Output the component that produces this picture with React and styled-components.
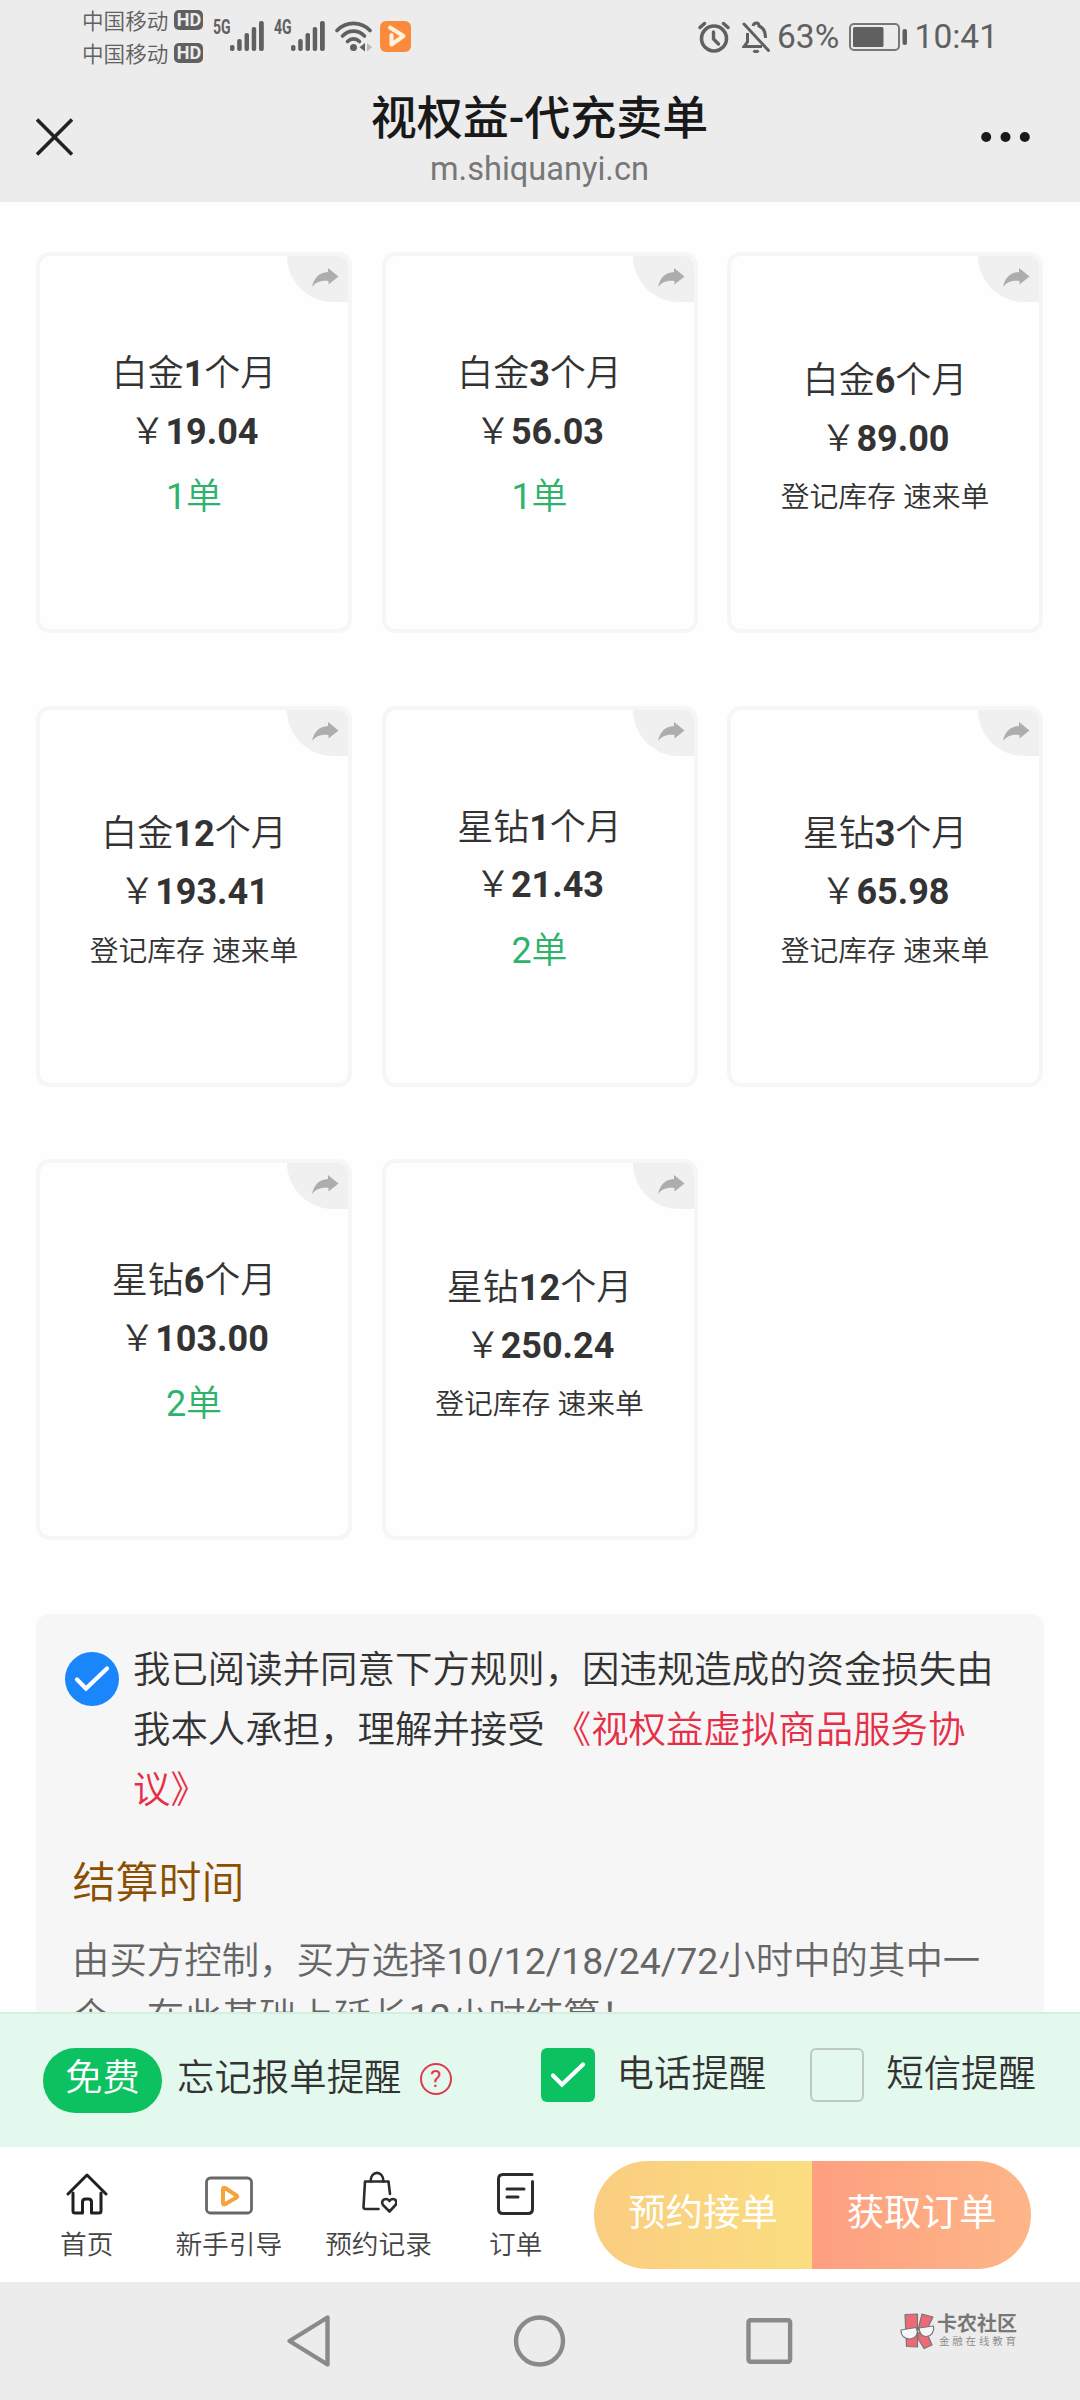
import React from 'react';
import styled, {createGlobalStyle, css} from 'styled-components';

const products = [
    {brand: '白金', months: 1, price: '19.04', count: 1},
    {brand: '白金', months: 3, price: '56.03', count: 1},
    {brand: '白金', months: 6, price: '89.00', count: 0},
    {brand: '白金', months: 12, price: '193.41', count: 0},
    {brand: '星钻', months: 1, price: '21.43', count: 2},
    {brand: '星钻', months: 3, price: '65.98', count: 0},
    {brand: '星钻', months: 6, price: '103.00', count: 2},
    {brand: '星钻', months: 12, price: '250.24', count: 0},
];

function App() {
    const [agreed, setAgreed] = React.useState(true);
    const [phone, setPhone] = React.useState(true);
    const [sms, setSms] = React.useState(false);

    return (
        <Screen>
            <GlobalStyle/>
            <StatusBar/>
            <TitleBar>
                <CloseIcon/>
                <Titles>
                    <Title>视权益-代充卖单</Title>
                    <Url>m.shiquanyi.cn</Url>
                </Titles>
                <MoreIcon/>
            </TitleBar>
            <Content>
                <Products>
                    {products.map((product, i) => <Product key={i} {...product}/>)}
                </Products>
                <Rules>
                    <Agreement onClick={() => setAgreed(!agreed)}>
                        <RoundCheck $on={agreed}>
                            <Tick/>
                        </RoundCheck>
                        <AgreementText>
                            我已阅读并同意下方规则，因违规造成的资金损失由我本人承担，理解并接受 <Link>《视权益虚拟商品服务协议》</Link>
                        </AgreementText>
                    </Agreement>
                    <RuleTitle>结算时间</RuleTitle>
                    <RuleText>
                        由买方控制，买方选择<Num>10/12/18/24/72</Num>小时中的其中一个，在此基础上延长<Num>12</Num>小时结算！
                    </RuleText>
                </Rules>
            </Content>
            <Reminder>
                <Free>免费</Free>
                <ReminderText>忘记报单提醒</ReminderText>
                <Help>?</Help>
                <Option onClick={() => setPhone(!phone)}>
                    <CheckBox $on={phone}>{phone && <Tick/>}</CheckBox>
                    <OptionText>电话提醒</OptionText>
                </Option>
                <Option $last onClick={() => setSms(!sms)}>
                    <CheckBox $on={sms}>{sms && <Tick/>}</CheckBox>
                    <OptionText>短信提醒</OptionText>
                </Option>
            </Reminder>
            <TabBar>
                <Tab $gap={60}><HomeIcon/>首页</Tab>
                <Tab $gap={62}><GuideIcon/>新手引导</Tab>
                <Tab $gap={43}><BagIcon/>预约记录</Tab>
                <Tab $gap={57}><OrderIcon/>订单</Tab>
                <Actions>
                    <Action>预约接单</Action>
                    <Action $primary>获取订单</Action>
                </Actions>
            </TabBar>
            <SystemBar/>
        </Screen>
    );
}

export default App;

function Product({brand, months, price, count}) {
    return (
        <Card>
            <Share>
                <svg width="28" height="22" viewBox="0 0 28 22">
                    <path d="M1 20C3 11 8 5.500 17 5V1l10.500 8.500-10 8V14C10 13 5 15 1 20z" fill="#adadad"/>
                </svg>
            </Share>
            <CardLine>{brand}<b>{months}</b>个月</CardLine>
            <CardLine>￥<b>{price}</b></CardLine>
            {count > 0 ? <Count><Num>{count}</Num>单</Count> : <Note>登记库存 速来单</Note>}
        </Card>
    );
}

function StatusBar() {
    return (
        <Status>
            <Carriers>
                <Carrier>中国移动<Hd>HD</Hd></Carrier>
                <Carrier>中国移动<Hd>HD</Hd></Carrier>
            </Carriers>
            <Signal label="5G"/>
            <Signal label="4G"/>
            <WifiIcon/>
            <PlayerIcon/>
            <StatusRight>
                <AlarmIcon/>
                <MutedIcon/>
                <StatusText $width={72}>63%</StatusText>
                <BatteryIcon/>
                <StatusText $width={91} $right>10:41</StatusText>
            </StatusRight>
        </Status>
    );
}

function Signal({label}) {
    return (
        <SignalBox>
            <Network>{label}</Network>
            <svg width="34" height="30" viewBox="0 0 34 30" fill="#606060">
                <rect x="0" y="24" width="4.500" height="6" rx="2"/>
                <rect x="7.200" y="18" width="4.500" height="12" rx="2"/>
                <rect x="14.500" y="12" width="4.500" height="18" rx="2"/>
                <rect x="21.700" y="6" width="4.500" height="24" rx="2"/>
                <rect x="29" y="0" width="4.800" height="30" rx="2"/>
            </svg>
        </SignalBox>
    );
}

const WifiIcon = () => (
    <svg width="38" height="31" viewBox="0 0 38 31">
        <g fill="none" stroke="#606060" strokeWidth="3.600" strokeLinecap="round">
            <path d="M2 9.500C11 0 26 0 35 9.500"/>
            <path d="M7.500 15C14 8.500 23 8.500 29.500 15"/>
            <path d="M12.500 20.500C16 17 21 17 24.500 20.500"/>
        </g>
        <circle cx="18.500" cy="26.500" r="3.500" fill="#606060"/>
        <path d="M30 22v8.500l-5.500-4.200z" fill="#606060"/>
        <path d="M32 22v8.500l5-4.200z" fill="#b8b8b8"/>
    </svg>
);

const PlayerIcon = () => (
    <PlayerSvg width="31" height="31" viewBox="0 0 31 31">
        <rect width="31" height="31" rx="6" fill="#fb8a3c"/>
        <path d="M10 6.500L23.500 15 11.500 23.500V14" fill="none" stroke="#fff3dc" strokeWidth="4"
              strokeLinejoin="round" strokeLinecap="round"/>
    </PlayerSvg>
);

const AlarmIcon = () => (
    <svg width="32" height="32" viewBox="0 0 32 32" fill="none" stroke="#606060" strokeLinecap="round">
        <circle cx="16" cy="17.500" r="12.500" strokeWidth="3.600"/>
        <path d="M15.500 11v7l5 5" strokeWidth="3.400"/>
        <path d="M2 6.500l4.500-4M30 6.500l-4.500-4" strokeWidth="3.400"/>
    </svg>
);

const MutedIcon = () => (
    <MutedSvg width="28" height="32" viewBox="0 0 28 32" fill="none" stroke="#606060" strokeWidth="3">
        <path d="M2 3l24.500 26.500" strokeLinecap="round"/>
        <path d="M11 5c1-4 6-4 6 0 4 1.500 6.500 5 6.500 12"/>
        <path d="M5.500 12v9L2 25.500h18"/>
        <path d="M11.500 29.500q2.500 2.500 5 0"/>
    </MutedSvg>
);

const BatteryIcon = () => (
    <svg width="58" height="28" viewBox="0 0 58 28">
        <rect x="1" y="1" width="49" height="26" rx="4" fill="none" stroke="#777" strokeWidth="2"/>
        <rect x="4" y="4" width="30.500" height="20" rx="1.500" fill="#606060"/>
        <rect x="53.500" y="6" width="4.500" height="16" rx="2" fill="#606060"/>
    </svg>
);

const CloseIcon = () => (
    <svg width="37" height="38" viewBox="0 0 37 38" stroke="#222" strokeWidth="3.600">
        <path d="M1 1.500L36 36.500M36 1.500L1 36.500"/>
    </svg>
);

const MoreIcon = () => (
    <svg width="49" height="10" viewBox="0 0 49 10" fill="#191919">
        <circle cx="5.200" cy="5" r="5"/>
        <circle cx="24.500" cy="5" r="5"/>
        <circle cx="43.800" cy="5" r="5"/>
    </svg>
);

const Tick = () => (
    <svg width="36" height="28" viewBox="0 0 36 28" fill="none" stroke="#fff" strokeWidth="4.200" strokeLinecap="round">
        <path d="M3 14.500l9 9L33 3.500"/>
    </svg>
);

const HomeIcon = () => (
    <svg width="42" height="42" viewBox="0 0 42 42" fill="none" stroke="#1f1f24" strokeWidth="3" strokeLinecap="round" strokeLinejoin="round">
        <path d="M2 21L21 2l19 19"/>
        <path d="M7 20v18q0 2 2 2h7.500V29q0-3 3-3h3q3 0 3 3v11H33q2 0 2-2V20"/>
    </svg>
);

const GuideIcon = () => (
    <svg width="48" height="42" viewBox="0 0 48 42" fill="none" strokeLinejoin="round">
        <rect x="1.500" y="5" width="45" height="35" rx="4" stroke="#686868" strokeWidth="2.800"/>
        <path d="M18 16.500v13.500q0 2 2 1.200L31.500 24.500q1.500-1 0-2L20 15q-2-1-2 1.500z" stroke="#f5a33c" strokeWidth="4"/>
    </svg>
);

const BagIcon = () => (
    <svg width="36" height="46" viewBox="-1 0 36 46" fill="none" stroke="#2c2c2c" strokeWidth="2.600" strokeLinecap="round" strokeLinejoin="round">
        <path d="M16.500 40H3.500Q1.500 40 1.500 38L3 12.500H26.500L28 25"/>
        <path d="M8.500 12.500C8.500 1 21.500 1 21.500 12.500"/>
        <path d="M27.500 42.500L21 36c-3-5 3-8 6.500-4 3.500-4 9-1 6 4z"/>
    </svg>
);

const OrderIcon = () => (
    <svg width="37" height="42" viewBox="0 0 37 42" fill="none" stroke="#2c2c2c" strokeWidth="3" strokeLinecap="round">
        <path d="M35 1.500H6Q1.500 1.500 1.500 6V36Q1.500 40.500 6 40.500H31Q35.500 40.500 35.500 36V8.500"/>
        <path d="M10 16H27M10 24H21"/>
    </svg>
);

const SystemBar = () => (
    <System>
        <svg width="46" height="54" viewBox="0 0 46 54" fill="none" stroke="#8a8a8a" strokeWidth="4.400" strokeLinejoin="round">
            <path d="M41.500 3.500V50.500L3.500 27z"/>
        </svg>
        <svg width="54" height="54" viewBox="0 0 54 54" fill="none" stroke="#8a8a8a" strokeWidth="4.400">
            <circle cx="27.500" cy="27" r="23.500"/>
        </svg>
        <svg width="48" height="48" viewBox="0 0 48 48" fill="none" stroke="#8a8a8a" strokeWidth="4.400">
            <rect x="2.500" y="3.200" width="41.600" height="41.600" rx="2"/>
        </svg>
        <Watermark>
            <svg width="35" height="36" viewBox="0 0 35 36" stroke="#777" strokeWidth="1.200" strokeLinejoin="round">
                <path d="M5 1.500L17.500 1V34L6.500 33.500z" fill="#ee6877"/>
                <path d="M22 1l11 3-7 14-8-1zM18 20l8-2 6 14-8 3.500-6-10z" fill="#ee6877"/>
                <path d="M1 17l15-2.500c3 6 0 11-6 11.500-5 0-9-3-9-9z" fill="#f7f7f7"/>
                <path d="M19 15l14.500-2c1 6-2 10-7 10.500-4 0-7-3-7.500-8.500z" fill="#f7f7f7"/>
            </svg>
            <div>
                <WatermarkName>卡农社区</WatermarkName>
                <WatermarkSub>金融在线教育</WatermarkSub>
            </div>
        </Watermark>
    </System>
);

const GlobalStyle = createGlobalStyle`
  * {
    box-sizing: border-box;
  }

  body {
    margin: 0;
    background: #fff;
    font-family: Roboto, "Noto Sans CJK SC", sans-serif;
    font-weight: 350;
  }
`;

// Roboto turns to Light at the body's weight, so digits get their own
const Num = styled.span`
  font-weight: 400;
`;

const Screen = styled.div`
  display: flex;
  flex-direction: column;
  width: 1080px;
  height: 2400px;
  overflow: hidden;
  color: #333;
  background: #fefefe;
`;

const Status = styled.div`
  display: flex;
  align-items: flex-start;
  height: 72px;
  padding: 3px 82px 0 82px;
  background: #ececec;
  color: #606060;

  > svg {
    margin-top: 18px;
  }
`;

const Carriers = styled.div`
  width: 131px;
`;

const Carrier = styled.div`
  display: flex;
  align-items: center;
  height: 33px;
  font-size: 21.600px;
  font-weight: 350;
`;

const Hd = styled.span`
  width: 29px;
  height: 20px;
  margin-left: 6px;
  border-radius: 5px;
  background: #606060;
  color: #ececec;
  font-size: 18px;
  font-weight: 700;
  line-height: 20px;
  text-align: center;
`;

const SignalBox = styled.div`
  display: flex;
  width: 61px;
  margin-top: 18px;
`;

const Network = styled.span`
  width: 17px;
  font-size: 19.500px;
  font-weight: 700;
  line-height: 13px;
  transform: scaleX(0.720);
  transform-origin: left top;
`;

const PlayerSvg = styled.svg`
  margin-left: 7px;
`;

const StatusRight = styled.div`
  display: flex;
  align-items: center;
  height: 32px;
  margin: 18px 0 0 auto;
`;

const MutedSvg = styled.svg`
  margin: 0 7px 0 12px;
`;

const StatusText = styled.span`
  width: ${props => props.$width}px;
  font-size: 33.500px;
  font-weight: 400;
  line-height: 32px;
  text-align: ${props => props.$right ? 'right' : 'left'};
`;

const TitleBar = styled.div`
  display: flex;
  align-items: center;
  height: 130px;
  padding: 0 50px 0 36px;
  background: #ececec;
`;

const Titles = styled.div`
  flex: 1;
  padding: 4px 0 0 25px;
  text-align: center;
`;

const Title = styled.div`
  color: #191919;
  font-size: 46px;
  font-weight: 500;
  line-height: 60px;
`;

const Url = styled.div`
  color: #777;
  font-size: 32.600px;
  font-weight: 400;
  line-height: 42px;
`;

const Content = styled.div`
  flex: 1;
  min-height: 0;
  padding: 50px 36px 0;
  overflow: hidden;
`;

const Products = styled.div`
  display: grid;
  grid-template-columns: repeat(3, 316px);
  grid-auto-rows: 381px;
  gap: 72.500px 29.500px;
`;

const Card = styled.div`
  position: relative;
  display: flex;
  flex-direction: column;
  align-items: center;
  justify-content: center;
  padding-bottom: 12px;
  border: 4px solid #f6f6f6;
  border-radius: 14px;
  overflow: hidden;
`;

const Share = styled.div`
  position: absolute;
  top: 0;
  right: 0;
  display: flex;
  justify-content: flex-end;
  width: 61px;
  height: 46px;
  padding: 11px 9px 0 0;
  border-radius: 0 0 0 46px;
  background: #f0f0f0;
`;

const CardLine = styled.div`
  font-size: 36px;
  line-height: 57.600px;
`;

const Count = styled(CardLine)`
  margin-top: 8px;
  color: #2fb36c;
`;

const Note = styled.div`
  margin-top: 6px;
  font-size: 28.800px;
  line-height: 46px;
`;

const Rules = styled.div`
  height: 500px;
  margin-top: 74px;
  padding: 26px 29px;
  border-radius: 14px;
  background: #f6f6f6;
`;

const Agreement = styled.div`
  display: flex;
`;

const RoundCheck = styled.div`
  display: flex;
  flex: none;
  align-items: center;
  justify-content: center;
  width: 54px;
  height: 54px;
  margin: 12px 14px 0 0;
  border-radius: 50%;
  background: ${props => props.$on ? '#1a86fb' : '#ccc'};
`;

const AgreementText = styled.div`
  width: 867px;
  font-size: 37.440px;
  line-height: 60px;
`;

const Link = styled.span`
  color: #e62e46;
`;

const RuleTitle = styled.div`
  margin: 31px 0 0 7.500px;
  color: #8a4f00;
  font-size: 43px;
  line-height: 64px;
`;

const RuleText = styled.div`
  width: 920px;
  margin: 18px 0 0 7px;
  color: #666;
  font-size: 37.440px;
  line-height: 56px;
`;

const Reminder = styled.div`
  display: flex;
  align-items: flex-start;
  height: 135px;
  padding: 34px 0 0 43px;
  border-top: 2px solid #d2f0e0;
  background: #e3f9ed;
  font-size: 37.440px;
  line-height: 61px;
`;

const Free = styled.div`
  width: 119px;
  height: 65px;
  border-radius: 33px;
  background: #0bc160;
  color: #fff;
  text-align: center;
`;

const ReminderText = styled.div`
  margin-left: 15px;
`;

const Help = styled.div`
  width: 32px;
  height: 32px;
  margin: 15px 0 0 18px;
  border: 2px solid #e0394b;
  border-radius: 50%;
  color: #e0394b;
  font-size: 24px;
  font-weight: 400;
  line-height: 29px;
  text-align: center;
`;

const Option = styled.div`
  display: flex;
  margin-left: ${props => props.$last ? 44 : 89}px;
`;

const CheckBox = styled.div`
  display: flex;
  align-items: center;
  justify-content: center;
  width: 54px;
  height: 54px;
  border-radius: 6px;
  ${props => props.$on ? css`
    background: #0bc160;
  ` : css`
    border: 2px solid #bfc9c4;
  `}
`;

const OptionText = styled.div`
  margin-left: 22px;
  line-height: 52px;
`;

const TabBar = styled.div`
  display: flex;
  align-items: flex-start;
  height: 135px;
  background: #fff;
`;

const Tab = styled.div`
  display: flex;
  flex-direction: column;
  align-items: center;
  justify-content: flex-end;
  height: 118px;
  margin-left: ${props => props.$gap}px;
  color: #444;
  font-size: 26.700px;
  line-height: 40px;

  svg {
    margin-bottom: 10px;
  }
`;

const Actions = styled.div`
  display: flex;
  width: 437px;
  height: 108px;
  margin: 14px 49px 0 auto;
  border-radius: 54px;
  overflow: hidden;
`;

const Action = styled.div`
  width: ${props => props.$primary ? 219 : 218}px;
  background: ${props => props.$primary
    ? 'linear-gradient(90deg, #fe9f80, #fdb687)'
    : 'linear-gradient(90deg, #facd80, #fbde80)'};
  color: #fff;
  font-size: 37.440px;
  font-weight: 400;
  line-height: 104px;
  text-align: center;
`;

const System = styled.div`
  position: relative;
  display: flex;
  align-items: center;
  height: 118px;
  padding-left: 286px;
  gap: 180px;
  background: #ececec;
`;

const Watermark = styled.div`
  position: absolute;
  top: 31px;
  left: 900px;
  display: flex;
  gap: 2px;
`;

const WatermarkName = styled.div`
  color: #777;
  font-size: 20px;
  font-weight: 700;
  line-height: 22px;
`;

const WatermarkSub = styled.div`
  color: #888;
  font-size: 10.500px;
  letter-spacing: 2.800px;
  line-height: 14px;
  padding-left: 2px;
`;
